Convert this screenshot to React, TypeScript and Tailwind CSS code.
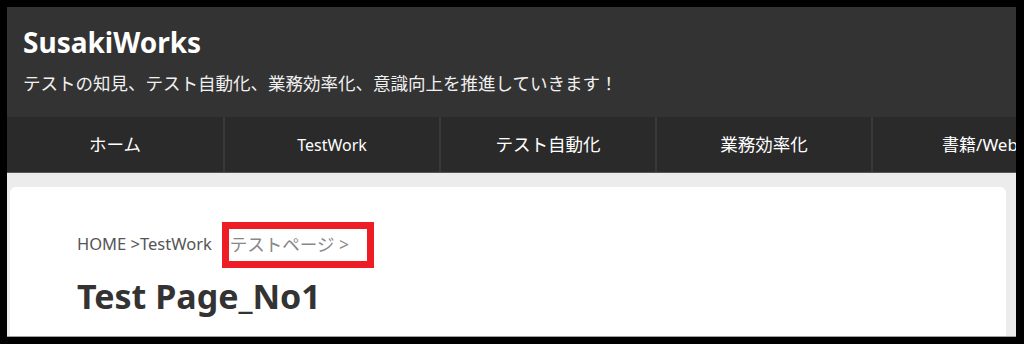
import React from "react";

const font = { fontFamily: '"Noto Sans", "Noto Sans CJK JP", sans-serif' };

export default function App() {
  const nav = [
    { t: "ホーム", c: "text-[17.5px]" },
    { t: "TestWork", c: "text-[16px]" },
    { t: "テスト自動化", c: "text-[17.5px]" },
    { t: "業務効率化", c: "text-[17.5px]" },
    { t: "書籍/Web", c: "text-[17px]" },
  ];
  return (
    <div className="w-[1024px] h-[344px] bg-black pt-[7px] pl-[7px] pr-[8px] pb-[7px] overflow-hidden" style={font}>
      <div className="relative h-full flex flex-col bg-[#ececec] border-b border-[#a0a0a0] overflow-hidden">
        <header className="h-[110px] shrink-0 bg-[#333333] pl-[16px] pt-[17px]">
          <div className="text-white font-bold text-[28px] leading-[36px]">SusakiWorks</div>
          <div className="text-[#f0f0f0] text-[17.5px] leading-[24px] mt-[11px]">
            テストの知見、テスト自動化、業務効率化、意識向上を推進していきます！
          </div>
        </header>
        <nav className="h-[56px] shrink-0 bg-[#2a2a2a] border-b border-[#555] flex whitespace-nowrap">
          {nav.map((n, i) => (
            <div
              key={n.t}
              className={
                "w-[216px] shrink-0 flex items-center justify-center text-white " +
                n.c +
                (i > 0 ? " border-l-2 border-[#383838]" : "")
              }
            >
              {n.t}
            </div>
          ))}
        </nav>
        <main className="flex-1 pl-[3px] pr-[10px] pt-[14px]">
          <div className="h-full bg-white rounded-t-[6px] pl-[67px] pt-[45px]">
            <div className="flex items-center h-[24px] whitespace-nowrap">
              <span className="text-[#555] text-[16.5px]">HOME &gt;TestWork</span>
              <span className="text-[#888] text-[17.5px] ml-[18px]">テストページ &gt;</span>
            </div>
            <h1 className="text-[#333] font-bold text-[34px] leading-[44px] mt-[18px]">Test Page_No1</h1>
          </div>
        </main>
        <div className="absolute left-[215px] top-[215px] w-[152px] h-[46px] border-[7px] border-[#ee1c25]" />
      </div>
    </div>
  );
}
